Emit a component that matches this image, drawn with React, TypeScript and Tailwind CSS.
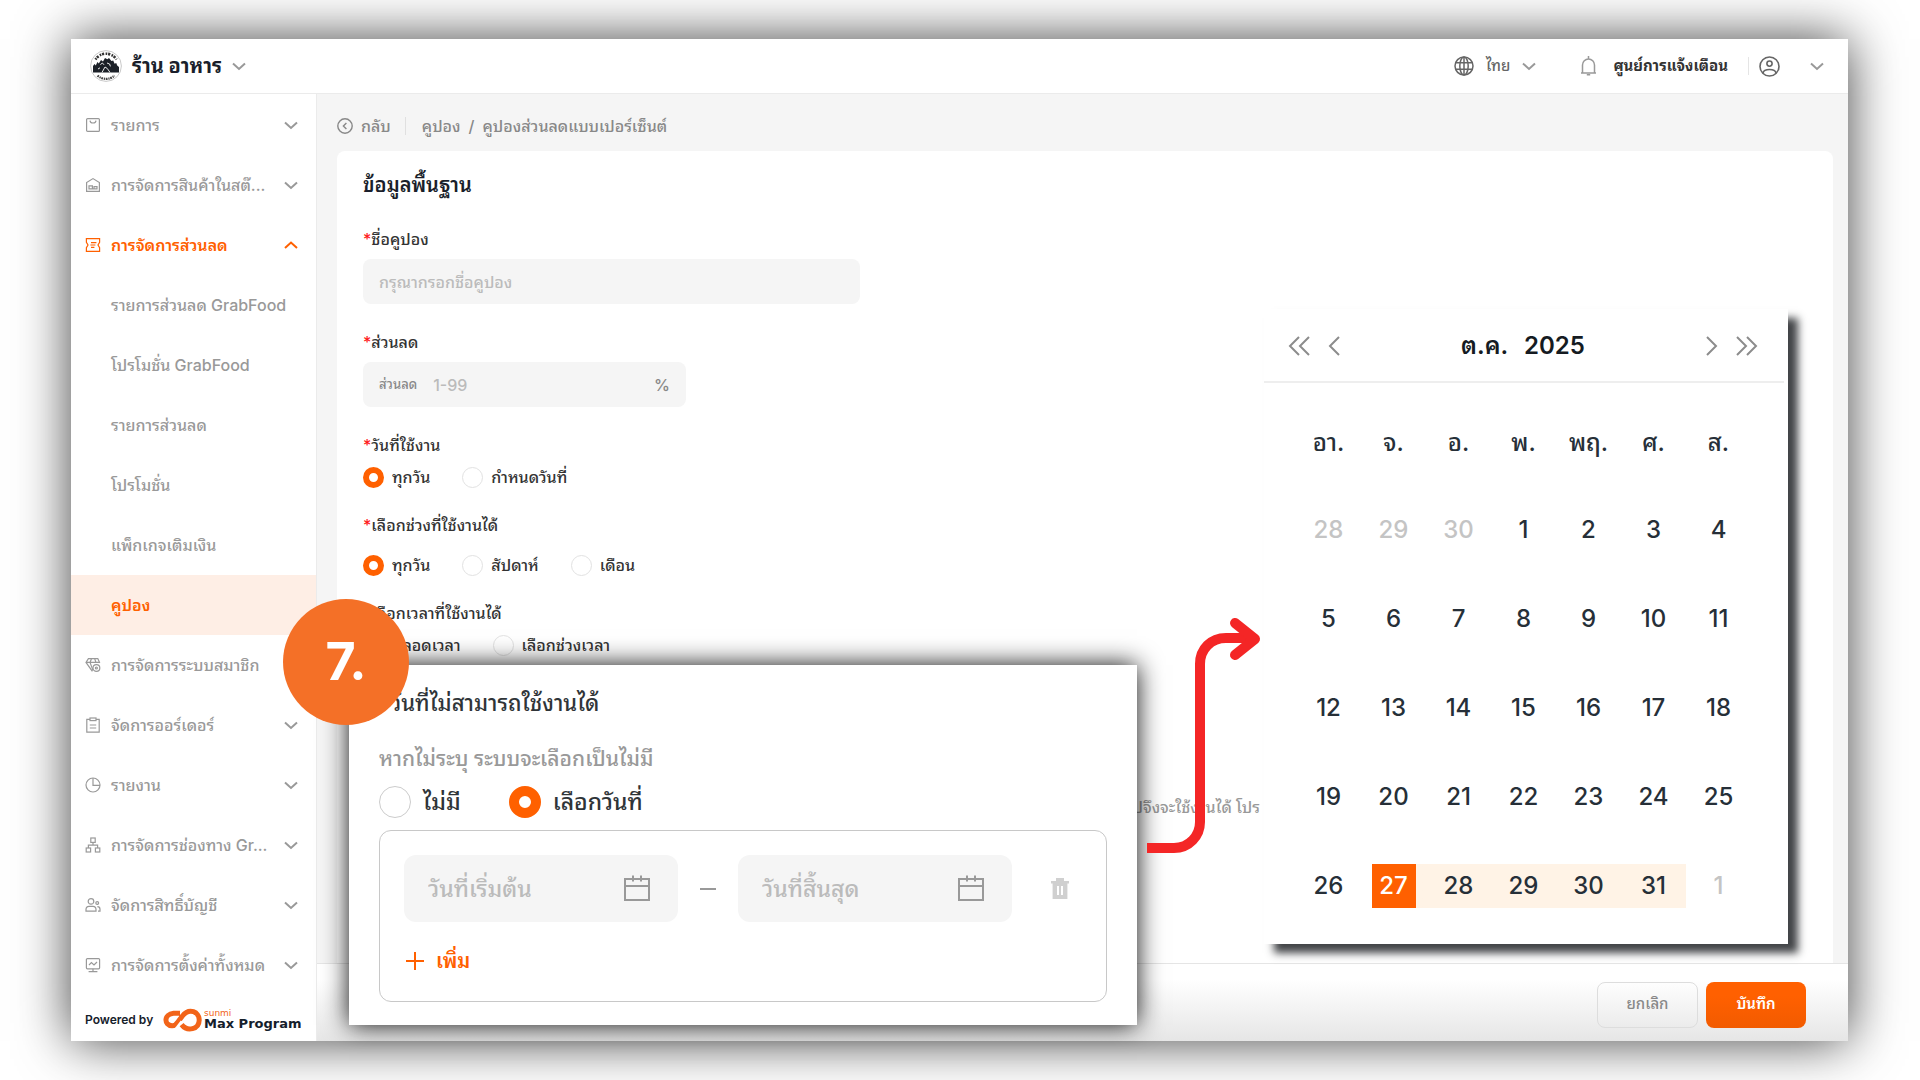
import React, { useState } from 'react';

interface MenuItem {
    label: string;
    icon?: React.ReactNode;
    expandable?: boolean;
    open?: boolean;
    selected?: boolean;
}

function MenuIcon({ children }: { children: React.ReactNode }) {
    return (
        <svg className="size-4 shrink-0" viewBox="0 0 16 16" fill="none" stroke="currentColor" strokeWidth="1.2">
            {children}
        </svg>
    );
}

function Chevron({ up = false }: { up?: boolean }) {
    return (
        <svg className="size-3.5 shrink-0" viewBox="0 0 14 14" fill="none" stroke="currentColor" strokeWidth="2">
            <path d={up ? 'M1 10 7 4.5 13 10' : 'M1 4.5 7 10 13 4.5'} />
        </svg>
    );
}

const menu: MenuItem[] = [
    {
        label: 'รายการ',
        expandable: true,
        icon: (
            <MenuIcon>
                <rect x="1.6" y="1.6" width="12.8" height="12.8" rx="1" />
                <path d="M5 3.6c.4 3.2 5.6 3.2 6 0" />
            </MenuIcon>
        ),
    },
    {
        label: 'การจัดการสินค้าในสต๊...',
        expandable: true,
        icon: (
            <MenuIcon>
                <path d="M1.6 14.4V5.6L8 1.6l6.4 4v8.8z" />
                <path d="M4 11.8h8M4 8.8h3.4v3H4zM9 9.6h3v2.2H9z" />
            </MenuIcon>
        ),
    },
    {
        label: 'การจัดการส่วนลด',
        expandable: true,
        open: true,
        icon: (
            <MenuIcon>
                <path d="M1.4 1.6h13.2v3.8L13 8l1.6 2.6v3.8H1.4v-3.8L3 8 1.4 5.4z" />
                <path d="M6 5.6h5.4M5.4 8h5M6 10.4h3.4" />
            </MenuIcon>
        ),
    },
    { label: 'รายการส่วนลด GrabFood' },
    { label: 'โปรโมชั่น GrabFood' },
    { label: 'รายการส่วนลด' },
    { label: 'โปรโมชั่น' },
    { label: 'แพ็กเกจเติมเงิน' },
    { label: 'คูปอง', selected: true },
    {
        label: 'การจัดการระบบสมาชิก',
        expandable: true,
        icon: (
            <MenuIcon>
                <path d="M14.8 6 12.8 1.6H3.4L1 5.4l6.4 9M1 5.4h13.8M5 5.4l3 8M5 5.4l1.6-3.8M11 5.4 9.6 1.6" />
                <circle cx="11.4" cy="11" r="3.4" />
                <circle cx="11.4" cy="11" r="1" />
            </MenuIcon>
        ),
    },
    {
        label: 'จัดการออร์เดอร์',
        expandable: true,
        icon: (
            <MenuIcon>
                <path d="M5 2.4H1.8v12.8h12.4V2.4H11" />
                <rect x="5" y="1" width="6" height="2.6" />
                <path d="M4.8 8h6.4M4.8 11h6.4" />
            </MenuIcon>
        ),
    },
    {
        label: 'รายงาน',
        expandable: true,
        icon: (
            <MenuIcon>
                <circle cx="8" cy="8" r="7" />
                <path d="M8 1v7.4h7" />
            </MenuIcon>
        ),
    },
    {
        label: 'การจัดการช่องทาง Gr...',
        expandable: true,
        icon: (
            <MenuIcon>
                <rect x="5.8" y="1" width="4.4" height="4.4" />
                <rect x="1.2" y="11" width="4.4" height="4" />
                <rect x="10.4" y="11" width="4.4" height="4" />
                <path d="M8 5.4v2.8M3.4 11V8.2h9.2V11" />
            </MenuIcon>
        ),
    },
    {
        label: 'จัดการสิทธิ์บัญชี',
        expandable: true,
        icon: (
            <MenuIcon>
                <circle cx="6" cy="4.4" r="2.8" />
                <path d="M1 14.2v-1.6C1 10.6 2.4 9.4 4 9.4h4c1.6 0 3 1.2 3 3.2v1.6z" />
                <circle cx="12.2" cy="6" r="1.4" />
                <path d="M12.4 9.6c1.6 0 2.6 1 2.6 2.6v2h-2" />
            </MenuIcon>
        ),
    },
    {
        label: 'การจัดการตั้งค่าทั้งหมด',
        expandable: true,
        icon: (
            <MenuIcon>
                <rect x="1.4" y="1.6" width="13.2" height="10.2" rx="1" />
                <path d="M4 8l2.4-2.4L9 8l3-3M8 11.8v2.6M3.6 14.6h8.8" />
            </MenuIcon>
        ),
    },
];

const weekdays = ['อา.', 'จ.', 'อ.', 'พ.', 'พฤ.', 'ศ.', 'ส.'];

// Sunday 28 September 2025 is the first cell of the October sheet
const weeks = Array.from({ length: 5 }, (_, w) => Array.from({ length: 7 }, (_, d) => new Date(2025, 8, 28 + w * 7 + d)));

function ShopLogo() {
    return (
        <svg className="size-8" viewBox="0 0 32 32" fill="none">
            <circle cx="16" cy="16" r="15.4" fill="#fff" stroke="#bbb" strokeWidth="0.8" />
            <path d="M5.5 9.5A12.4 12.4 0 0 1 26.5 9.5" stroke="#333" strokeWidth="2.6" strokeDasharray="1.6 0.8 2.2 1.4" />
            <path d="M7.5 25.6A12.6 12.6 0 0 0 24.5 25.6" stroke="#444" strokeWidth="2.2" strokeDasharray="1.8 0.8 1.2 0.7" />
            <path
                d="M3 22.4V16l1.6-2 1.2 1.6L7.4 12l1.4 1.6L11 10l2 1.4L15 8l2.4 1.2L19 8l2.4 3 1.8-.6 1.4 3.4 1.6-.8 1 2.6 1.8 1.4v5.4z"
                fill="#1b2027"
            />
            <path d="M12 22.4l3-5.4 2.2 1.4L20 22.4M10.4 14.6l2-1.6 1.6 1.8M17 13l2.6 1 .8 2.4M8 19l2-1.2" stroke="#fff" strokeWidth="0.9" />
        </svg>
    );
}

function CalendarIcon() {
    return (
        <svg className="h-[27px] w-[26px] shrink-0" viewBox="0 0 26 27" fill="none" stroke="#999" strokeWidth="2">
            <path d="M1 4h24v21H1zM1 11h24M9 .5v6M17 .5v6" />
        </svg>
    );
}

function Radio({ name, label, checked = false, large = false }: { name: string; label: string; checked?: boolean; large?: boolean }) {
    return (
        <label className={large ? 'flex items-center gap-3' : 'flex items-center gap-2'}>
            <input
                type="radio"
                name={name}
                defaultChecked={checked}
                className={`m-0 shrink-0 appearance-none rounded-full border bg-white checked:border-[#ff6000] ${
                    large ? 'size-8 border-[#ccc] checked:border-[10px]' : 'size-[21px] border-[#e2e2e2] checked:border-[6px]'
                }`}
            />
            <span>{label}</span>
        </label>
    );
}

function FieldLabel({ htmlFor, children }: { htmlFor?: string; children: React.ReactNode }) {
    const Tag = htmlFor ? 'label' : 'p';
    return (
        <Tag htmlFor={htmlFor} className="block leading-6">
            <span className="text-[#ff1a1a]">*</span>
            {children}
        </Tag>
    );
}

function Sidebar() {
    return (
        <aside className="flex w-[246px] shrink-0 flex-col border-r border-[#ebebeb] bg-white pt-px">
            <nav>
                {menu.map((item) => (
                    <a
                        key={item.label}
                        href="#"
                        className={`flex h-[60px] items-center gap-2.5 pr-[18px] pl-[14px] whitespace-nowrap ${
                            item.selected
                                ? 'bg-[#feeee5] text-[#ff6000]'
                                : item.open
                                ? 'text-[#ff6000]'
                                : 'text-[#999]'
                        }`}
                    >
                        {item.icon ?? <span className="w-4 shrink-0" />}
                        <span className={item.selected || item.open ? 'flex-1 font-semibold' : 'flex-1'}>{item.label}</span>
                        {item.expandable && <Chevron up={item.open} />}
                    </a>
                ))}
            </nav>
            <div className="flex flex-1 items-center px-[14px] pt-1 text-[#15202b]">
                <span className="w-[78px] text-xs font-semibold">Powered by</span>
                <svg className="h-6 w-[39px]" viewBox="0 0 39 24" fill="none" stroke="#f26419" strokeWidth="5">
                    <path d="M17 5.2h-6.4C.6 6 .8 17.4 9 17.8c3.6.2 4.8-2.2 6.8-5l3.4-4.6C26.4-1 36.4 4 36.2 12.2 36 21.4 24.4 24 18.6 16.6" />
                    <path d="M13 20.4 18.6 13" strokeWidth="2" stroke="#fff" />
                </svg>
                <div className="pl-0.5 font-['DejaVu_Sans',sans-serif] font-bold">
                    <div className="text-[9px] leading-2 font-normal text-[#f26419]">sunmi</div>
                    <div className="text-[13px] leading-[14px] whitespace-nowrap">Max Program</div>
                </div>
            </div>
        </aside>
    );
}

function Header() {
    return (
        <header className="flex h-[55px] shrink-0 items-center border-b border-[#ebebeb] bg-white pr-6 pl-[19px] text-[15px] text-[#666]">
            <button className="flex items-center gap-2.5 text-[#999]">
                <ShopLogo />
                <span className="text-xl font-bold text-[#1a1f2b]">ร้าน อาหาร</span>
                <Chevron />
            </button>
            <button className="ml-auto flex items-center gap-3">
                <svg className="size-5" viewBox="0 0 20 20" fill="none" stroke="currentColor" strokeWidth="1.5">
                    <circle cx="10" cy="10" r="9" />
                    <ellipse cx="10" cy="10" rx="4.2" ry="9" />
                    <path d="M1.8 6.8h16.4M1.8 13.2h16.4M10 1v18" />
                </svg>
                <span>ไทย</span>
                <span className="text-[#999]">
                    <Chevron />
                </span>
            </button>
            <button className="ml-11 flex items-center gap-4 text-[#333]">
                <svg className="h-5 w-[17px]" viewBox="0 0 17 20" fill="none" stroke="#999" strokeWidth="1.5">
                    <path d="M1 17h15M2.5 17V9a6 6 0 0 1 12 0v8M8.5 0v3M6.8 18.8h3.4" />
                </svg>
                <span className="font-bold">ศูนย์การแจ้งเตือน</span>
            </button>
            <span className="mr-2.5 ml-5 h-[18px] w-px bg-[#e5e5e5]" />
            <button className="flex items-center gap-[30px]" aria-label="บัญชี">
                <svg className="size-[21px]" viewBox="0 0 21 21" fill="none" stroke="currentColor" strokeWidth="1.6">
                    <circle cx="10.5" cy="10.5" r="9.5" />
                    <circle cx="10.5" cy="7.6" r="2.6" />
                    <path d="M4 17c1-4.6 12-4.6 13 0" />
                </svg>
                <span className="text-[#999]">
                    <Chevron />
                </span>
            </button>
        </header>
    );
}

function BasicInfoForm() {
    return (
        <form className="flex-1 rounded-t-lg bg-white px-[26px] pt-[18px] text-[#333]">
            <h1 className="text-xl leading-8 font-semibold text-[#1a1f2b]">ข้อมูลพื้นฐาน</h1>

            <div className="mt-[26px]">
                <FieldLabel htmlFor="coupon-name">ชื่อคูปอง</FieldLabel>
                <input
                    id="coupon-name"
                    placeholder="กรุณากรอกชื่อคูปอง"
                    className="mt-2 block h-[45px] w-[497px] rounded-lg bg-[#f5f5f5] px-4 placeholder:text-[#bbb]"
                />
            </div>

            <div className="mt-[26px]">
                <FieldLabel htmlFor="discount">ส่วนลด</FieldLabel>
                <div className="mt-2 flex h-[45px] w-[323px] items-center gap-4 rounded-lg bg-[#f5f5f5] px-4 text-[#888]">
                    <span className="text-[13px]">ส่วนลด</span>
                    <input id="discount" placeholder="1-99" className="min-w-0 flex-1 placeholder:text-[#bbb]" />
                    <span>%</span>
                </div>
            </div>

            <div className="mt-[26px]">
                <FieldLabel>วันที่ใช้งาน</FieldLabel>
                <div className="mt-2 flex h-6 items-center gap-8">
                    <Radio name="active-days" label="ทุกวัน" checked />
                    <Radio name="active-days" label="กำหนดวันที่" />
                </div>
            </div>

            <div className="mt-6">
                <FieldLabel>เลือกช่วงที่ใช้งานได้</FieldLabel>
                <div className="mt-4 flex h-6 items-center gap-8">
                    <Radio name="period" label="ทุกวัน" checked />
                    <Radio name="period" label="สัปดาห์" />
                    <Radio name="period" label="เดือน" />
                </div>
            </div>

            <div className="mt-6">
                <FieldLabel>เลือกเวลาที่ใช้งานได้</FieldLabel>
                <div className="mt-2 flex h-6 items-center gap-8">
                    <Radio name="time" label="ตลอดเวลา" checked />
                    <Radio name="time" label="เลือกช่วงเวลา" />
                </div>
            </div>

            <p className="mt-[138px] pl-[764px] leading-6 whitespace-nowrap text-[#999]">ไปจึงจะใช้งานได้ โปร</p>
        </form>
    );
}

function DateField({ id, label }: { id: string; label: string }) {
    return (
        <label htmlFor={id} className="flex h-[67px] w-[274px] items-center rounded-xl bg-[#f5f5f5] pr-7 pl-6">
            <input id={id} placeholder={label} aria-label={label} className="h-full min-w-0 flex-1 placeholder:text-[#bbb]" />
            <CalendarIcon />
        </label>
    );
}

function UnavailableDates() {
    return (
        <section className="absolute top-[665px] left-[349px] w-[788px] bg-white px-[30px] pt-[22px] pb-[23px] text-[23px] text-[#2f3438] shadow-[0_0_24px_rgba(0,0,0,0.95)]">
            <h2 className="text-[22px] leading-8">
                <span className="text-[#ff1a1a]">*</span>วันที่ไม่สามารถใช้งานได้
            </h2>
            <p className="mt-6 text-[21px] leading-8 text-[#999]">หากไม่ระบุ ระบบจะเลือกเป็นไม่มี</p>
            <div className="mt-[11px] flex h-8 items-center gap-12">
                <Radio name="unavailable" label="ไม่มี" large />
                <Radio name="unavailable" label="เลือกวันที่" large checked />
            </div>
            <div className="mt-3 rounded-xl border border-[#c8c8c8] px-6 pt-6 pb-[22px]">
                <div className="flex items-center">
                    <DateField id="start-date" label="วันที่เริ่มต้น" />
                    <span className="mx-[22px] h-0.5 w-4 bg-[#999]" />
                    <DateField id="end-date" label="วันที่สิ้นสุด" />
                    <button type="button" aria-label="ลบ" className="ml-[38px]">
                        <svg className="h-[21px] w-5" viewBox="0 0 20 21" fill="#d0d0d0">
                            <path fillRule="evenodd" d="M6 0h8v3h5v2.6h-1.6V21H2.6V5.6H1V3h5zM7 8v9h2V8zm4 0v9h2V8z" />
                        </svg>
                    </button>
                </div>
                <button type="button" className="mt-[21px] flex h-9 items-center gap-3 pl-0.5 text-xl font-semibold text-[#ff6000]">
                    <svg className="size-[18px]" viewBox="0 0 18 18" stroke="currentColor" strokeWidth="2">
                        <path d="M9 0v18M0 9h18" />
                    </svg>
                    เพิ่ม
                </button>
            </div>
        </section>
    );
}

function NavButton({ label, d, double = false }: { label: string; d: string; double?: boolean }) {
    return (
        <button type="button" aria-label={label}>
            <svg
                className={double ? 'h-5 w-[22px]' : 'h-5 w-3'}
                viewBox={double ? '0 0 22 20' : '0 0 12 20'}
                fill="none"
                stroke="#8c8c8c"
                strokeWidth="2"
            >
                <path d={d} />
            </svg>
        </button>
    );
}

function DatePicker() {
    const [start, setStart] = useState(27);

    const cellStyle = (date: Date) => {
        if (date.getMonth() !== 9) return 'text-[#c4c4c4]';
        if (date.getDate() === start) return 'bg-[#ff6000] text-white';
        return '';
    };

    const inRange = (date: Date) => date.getMonth() === 9 && date.getDate() >= start;

    return (
        <section className="absolute top-[309px] left-[1264px] w-[524px] bg-white pb-[14px] text-[#262f38] shadow-[10px_9px_8px_rgba(50,52,55,0.92)]">
            <div className="mr-1 flex h-[74px] items-center gap-[18px] border-b-2 border-[#eee] pt-0.5 pr-[26px] pl-6">
                <NavButton label="ปีก่อนหน้า" double d="M11 1 2 10l9 9M21 1l-9 9 9 9" />
                <NavButton label="เดือนก่อนหน้า" d="M11 1 2 10l9 9" />
                <h2 className="flex flex-1 justify-center gap-4 text-2xl font-semibold text-[#151b22]">
                    <span>ต.ค.</span>
                    <span>2025</span>
                </h2>
                <NavButton label="เดือนถัดไป" d="M1 1l9 9-9 9" />
                <NavButton label="ปีถัดไป" double d="M1 1l9 9-9 9M11 1l9 9-9 9" />
            </div>
            <table className="mt-[18px] ml-8 w-[455px] table-fixed border-collapse text-center text-2xl">
                <thead>
                    <tr className="h-[84px]">
                        {weekdays.map((day) => (
                            <th key={day} scope="col" className="p-0 font-medium">
                                {day}
                            </th>
                        ))}
                    </tr>
                </thead>
                <tbody>
                    {weeks.map((week, i) => (
                        <tr key={i} className="h-[89px]">
                            {week.map((date) => (
                                <td key={date.getTime()} className="p-0">
                                    <div
                                        className={
                                            !inRange(date)
                                                ? ''
                                                : date.getDate() === start
                                                ? 'bg-linear-to-r from-transparent from-50% to-[#fff3e6] to-50%'
                                                : 'bg-[#fff3e6]'
                                        }
                                    >
                                        <button
                                            type="button"
                                            onClick={() => setStart(date.getDate())}
                                            className={`size-11 ${cellStyle(date)}`}
                                        >
                                            {date.getDate()}
                                        </button>
                                    </div>
                                </td>
                            ))}
                        </tr>
                    ))}
                </tbody>
            </table>
        </section>
    );
}

export default function App() {
    return (
        <div className="relative flex min-h-screen flex-col overflow-hidden bg-white py-[39px] pr-[72px] pl-[71px] font-[Inter,'Noto_Sans_Thai_Looped',sans-serif] text-base font-medium">
            <div className="flex flex-1 flex-col shadow-[0_0_50px_rgba(0,0,0,0.75)]">
                <Header />
                <div className="flex flex-1">
                    <Sidebar />
                    <main className="flex min-w-0 flex-1 flex-col bg-[#f5f5f5]">
                        {/* Breadcrumb */}
                        <div className="flex h-[57px] shrink-0 items-center px-5 pt-1.5 text-[#888]">
                            <a href="#" className="flex items-center gap-2">
                                <svg className="size-4" viewBox="0 0 16 16" fill="none" stroke="currentColor" strokeWidth="1.4">
                                    <circle cx="8" cy="8" r="7.2" />
                                    <path d="M9.4 5 6.4 8l3 3" />
                                </svg>
                                กลับ
                            </a>
                            <span className="mr-4 ml-[14px] h-[18px] w-px bg-[#e0e0e0]" />
                            <a href="#">คูปอง</a>
                            <span className="px-2">/</span>
                            <span>คูปองส่วนลดแบบเปอร์เซ็นต์</span>
                        </div>

                        <div className="flex flex-1 flex-col pr-[15px] pl-5">
                            <BasicInfoForm />
                        </div>

                        {/* Actions */}
                        <div className="flex h-[78px] shrink-0 items-center justify-end gap-2 border-t border-[#e5e5e5] bg-linear-to-b from-white from-20% to-[#e6e6e6] pt-1 pr-[42px]">
                            <button className="h-[46px] w-[101px] rounded-lg border border-[#ddd] text-[15px] text-[#888]">ยกเลิก</button>
                            <button className="h-[46px] w-[100px] rounded-lg bg-linear-to-b from-[#ff6000] from-30% to-[#f25b00] text-[15px] font-semibold text-white">
                                บันทึก
                            </button>
                        </div>
                    </main>
                </div>
            </div>

            <DatePicker />
            <UnavailableDates />

            {/* Arrow from the date fields to the calendar */}
            <svg className="absolute top-[610px] left-[1140px] h-[250px] w-[130px]" viewBox="0 0 130 250" fill="none" stroke="#f42626" strokeWidth="10">
                <path d="M7 238h27c15 0 26-12 26-26V54c0-15 11-26 26-26h28" />
                <path d="M95 13l20 16-20 16" strokeLinecap="round" strokeLinejoin="round" />
            </svg>

            {/* Step number */}
            <div className="absolute top-[599px] left-[283px] flex size-[126px] items-center justify-center rounded-full bg-[#f47027] font-[Inter,sans-serif] text-[52px] font-bold text-white">
                7.
            </div>
        </div>
    );
}
